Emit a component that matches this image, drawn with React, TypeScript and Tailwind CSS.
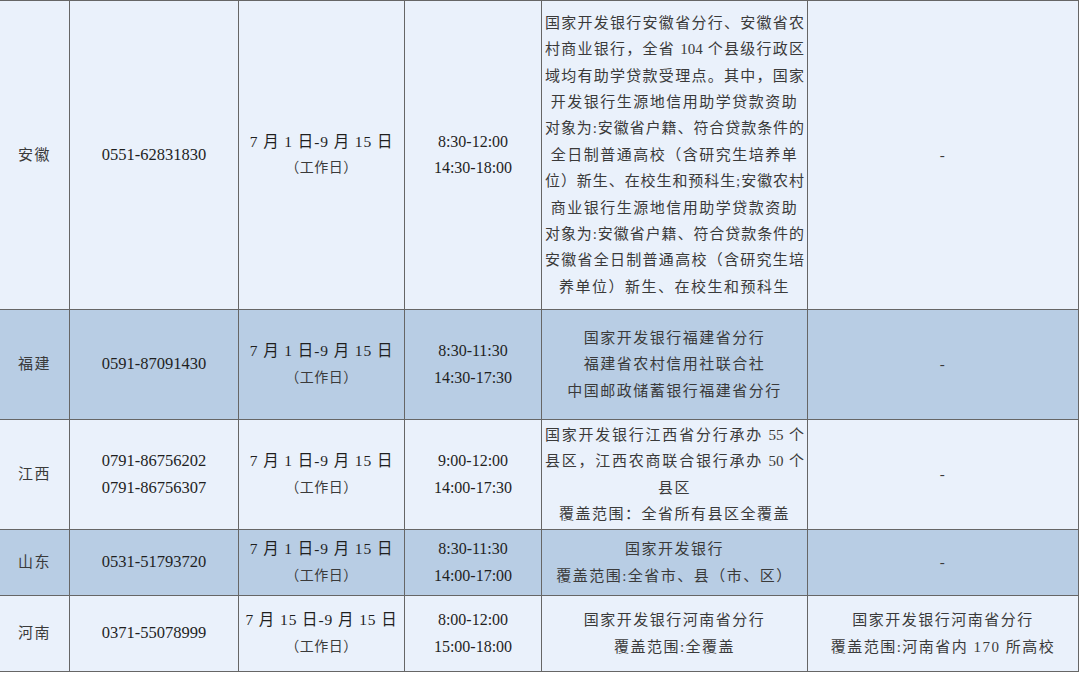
import React from "react";

const LIGHT = "bg-[#eaf1fb]";
const DARK = "bg-[#b8cde4]";

type Line = { t: string; j?: boolean };

type Row = {
  bg: string;
  prov: string;
  phone: string[];
  date: string;
  time: string[];
  content: Line[];
  last: string[];
};

const rows: Row[] = [
  {
    bg: LIGHT,
    prov: "安徽",
    phone: ["0551-62831830"],
    date: "7 月 1 日-9 月 15 日",
    time: ["8:30-12:00", "14:30-18:00"],
    content: [
      { t: "国家开发银行安徽省分行、安徽省农", j: true },
      { t: "村商业银行，全省 104 个县级行政区", j: true },
      { t: "域均有助学贷款受理点。其中，国家", j: true },
      { t: "开发银行生源地信用助学贷款资助" },
      { t: "对象为:安徽省户籍、符合贷款条件的", j: true },
      { t: "全日制普通高校（含研究生培养单" },
      { t: "位）新生、在校生和预科生;安徽农村", j: true },
      { t: "商业银行生源地信用助学贷款资助" },
      { t: "对象为:安徽省户籍、符合贷款条件的", j: true },
      { t: "安徽省全日制普通高校（含研究生培", j: true },
      { t: "养单位）新生、在校生和预科生" },
    ],
    last: ["-"],
  },
  {
    bg: DARK,
    prov: "福建",
    phone: ["0591-87091430"],
    date: "7 月 1 日-9 月 15 日",
    time: ["8:30-11:30", "14:30-17:30"],
    content: [
      { t: "国家开发银行福建省分行" },
      { t: "福建省农村信用社联合社" },
      { t: "中国邮政储蓄银行福建省分行" },
    ],
    last: ["-"],
  },
  {
    bg: LIGHT,
    prov: "江西",
    phone: ["0791-86756202", "0791-86756307"],
    date: "7 月 1 日-9 月 15 日",
    time: ["9:00-12:00", "14:00-17:30"],
    content: [
      { t: "国家开发银行江西省分行承办 55 个", j: true },
      { t: "县区，江西农商联合银行承办 50 个", j: true },
      { t: "县区" },
      { t: "覆盖范围：全省所有县区全覆盖" },
    ],
    last: ["-"],
  },
  {
    bg: DARK,
    prov: "山东",
    phone: ["0531-51793720"],
    date: "7 月 1 日-9 月 15 日",
    time: ["8:30-11:30", "14:00-17:00"],
    content: [{ t: "国家开发银行" }, { t: "覆盖范围:全省市、县（市、区）" }],
    last: ["-"],
  },
  {
    bg: LIGHT,
    prov: "河南",
    phone: ["0371-55078999"],
    date: "7 月 15 日-9 月 15 日",
    time: ["8:00-12:00", "15:00-18:00"],
    content: [{ t: "国家开发银行河南省分行" }, { t: "覆盖范围:全覆盖" }],
    last: ["国家开发银行河南省分行", "覆盖范围:河南省内 170 所高校"],
  },
];

const cell = "flex flex-col items-center justify-center text-center leading-[26.4px]";

function TextLine({ line }: { line: Line }) {
  if (line.j) {
    return (
      <div className="w-full text-justify [text-align-last:justify] whitespace-nowrap text-[15px]">
        {line.t}
      </div>
    );
  }
  return (
    <div className="w-full text-center whitespace-nowrap text-[15px] tracking-[1.5px]">{line.t}</div>
  );
}

export default function App() {
  return (
    <div className="w-[1080px] h-[673px] bg-white font-['Liberation_Serif','Noto_Sans_CJK_SC',sans-serif] text-[#3a3a3a]">
      <div className="grid grid-cols-[69px_168px_165px_136px_265px_270px] grid-rows-[308px_109px_109px_65px_75px] gap-px bg-[#666666] border-t border-r border-b border-[#666666] w-[1079px]">
        {rows.map((r, i) => (
          <React.Fragment key={i}>
            <div className={`${r.bg} ${cell} text-[15px] tracking-[1.5px]`}>{r.prov}</div>
            <div className={`${r.bg} ${cell} text-[16.5px] text-[#1f1f1f]`}>
              {r.phone.map((p, k) => (
                <div key={k}>{p}</div>
              ))}
            </div>
            <div className={`${r.bg} ${cell} text-[#1f1f1f]`}>
              <div className="text-[15.5px] tracking-[0.9px]">{r.date}</div>
              <div className="text-[14px] text-[#3a3a3a] tracking-[0.5px]">（工作日）</div>
            </div>
            <div className={`${r.bg} ${cell} text-[16px] text-[#1f1f1f]`}>
              {r.time.map((p, k) => (
                <div key={k}>{p}</div>
              ))}
            </div>
            <div className={`${r.bg} ${cell} px-[3px]`}>
              {r.content.map((l, k) => (
                <TextLine key={k} line={l} />
              ))}
            </div>
            <div className={`${r.bg} ${cell} px-[3px]`}>
              {r.last.map((l, k) => (
                <TextLine key={k} line={{ t: l }} />
              ))}
            </div>
          </React.Fragment>
        ))}
      </div>
    </div>
  );
}
